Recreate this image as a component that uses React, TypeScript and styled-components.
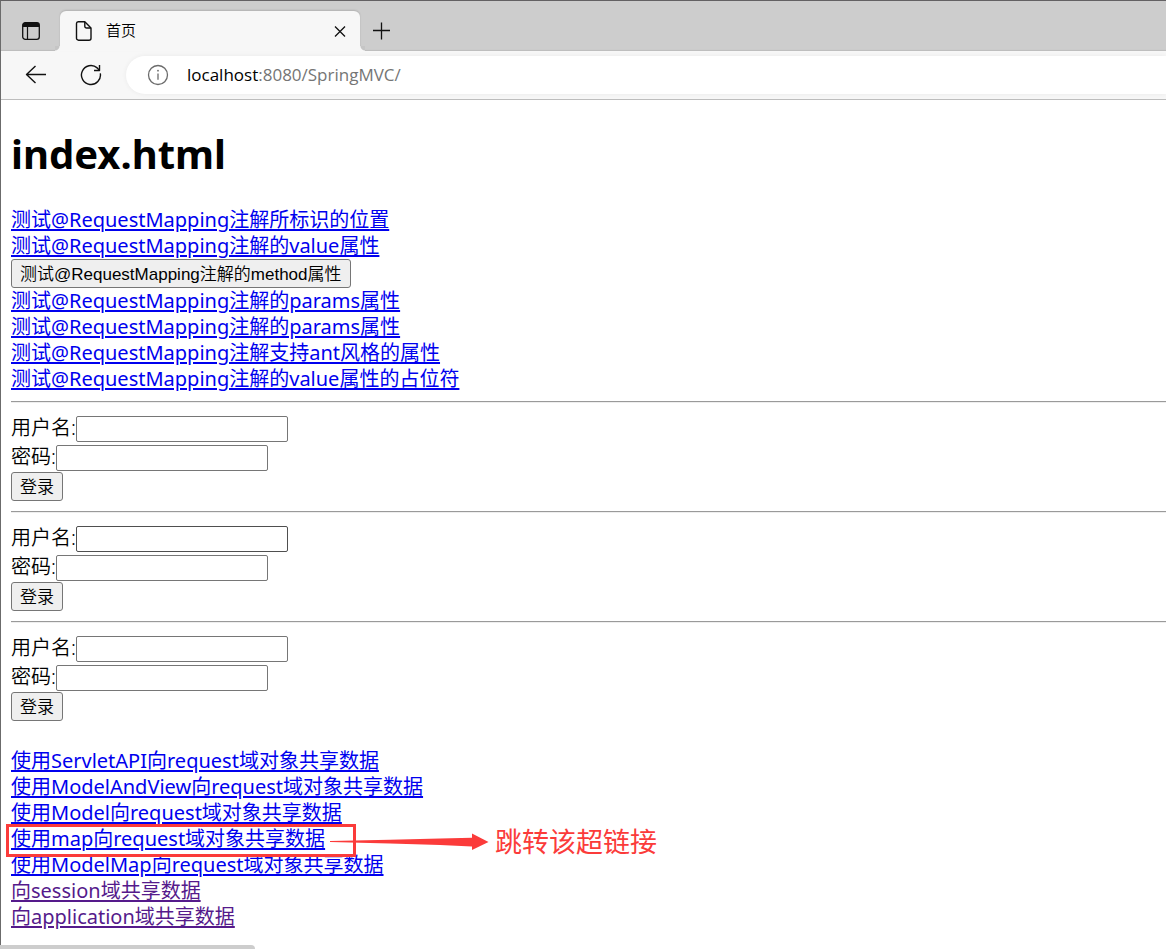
import React from "react";
import styled, { createGlobalStyle } from "styled-components";

const uiFont = `"Noto Sans", "Open Sans", "Noto Sans CJK SC", sans-serif`;
const controlFont = `"Liberation Sans", "Noto Sans CJK SC", sans-serif`;
const red = "#fb3b3a";
const labelWeight = 350;

const GlobalStyle = createGlobalStyle`
  *, *::before, *::after { box-sizing: border-box; }
  html, body { margin: 0; padding: 0; }
  body { background: #fff; color: #000; font-family: ${uiFont}; overflow-x: hidden; }
`;

const Frame = styled.div`
  border-top: 1px solid #636163;
  border-left: 1px solid #6b6b6b;
`;

const TabStrip = styled.div`
  display: flex;
  align-items: flex-end;
  height: 50px;
  background: #cdcdcd;
  box-shadow: inset 0 -2px 1px -1px #bdbdbd;
`;

const IconButton = styled.button<{ $width: number; $height: number }>`
  display: flex;
  flex: none;
  align-items: center;
  justify-content: center;
  width: ${(p) => p.$width}px;
  height: ${(p) => p.$height}px;
  padding: 0;
  border: 0;
  background: transparent;
  color: #111;
`;

const Tab = styled.div`
  position: relative;
  display: flex;
  align-items: center;
  width: 300px;
  height: 40px;
  padding: 0 9px 0 15px;
  border-radius: 6px 6px 0 0;
  background: #f7f7f7;
  box-shadow: 0 -1px 2px rgba(0, 0, 0, 0.14);

  &::before,
  &::after {
    content: "";
    position: absolute;
    bottom: 0;
    width: 5px;
    height: 5px;
  }
  &::before {
    right: 100%;
    background: radial-gradient(circle at 0 0, #c5c5c5 4px, #f7f7f7 5px);
  }
  &::after {
    left: 100%;
    background: radial-gradient(circle at 100% 0, #c5c5c5 4px, #f7f7f7 5px);
  }
`;

const TabTitle = styled.span`
  flex: 1;
  margin-left: 13px;
  padding-bottom: 2px;
  font-size: 15px;
  font-weight: ${labelWeight};
  line-height: 20px;
`;

const Toolbar = styled.div`
  display: flex;
  align-items: center;
  height: 49px;
  padding-left: 7px;
  border-bottom: 1px solid #bdbdbd;
  background: #f7f7f7;
`;

const AddressBar = styled.div`
  display: flex;
  flex: 1;
  align-items: center;
  height: 38px;
  margin-left: 8px;
  padding-left: 21px;
  border-radius: 19px 0 0 19px;
  background: #fff;
  box-shadow: 0 0 5px rgba(0, 0, 0, 0.06);
`;

const Url = styled.span`
  margin-left: 18px;
  font-family: "Open Sans", sans-serif;
  font-size: 17px;
  line-height: 24px;
  color: #757575;
`;

const Host = styled.span`
  color: #000;
`;

const Page = styled.main`
  padding: 27px 0 16px 10px;
  font-size: 20px;
  line-height: 26px;
`;

const Title = styled.h1`
  margin: 0 0 26px;
  font-size: 40px;
  line-height: 54px;
`;

const LinkList = styled.nav`
  display: flex;
  flex-direction: column;
  align-items: flex-start;
`;

const Link = styled.a<{ $visited?: boolean }>`
  color: ${(p) => (p.$visited ? "#551a8b" : "#0000ee")};
  text-decoration: underline;
  text-decoration-thickness: 2px;
  text-underline-offset: 2px;
  white-space: nowrap;
`;

const Button = styled.button`
  display: block;
  height: 29px;
  padding: 2px 8px 0;
  border: 1px solid #767676;
  border-radius: 3px;
  background: #efefef;
  color: #000;
  font-family: ${controlFont};
  font-size: 17px;
  font-weight: ${labelWeight};
  line-height: 25px;
  white-space: nowrap;
`;

const Divider = styled.hr`
  margin: 9px 0 10px;
  height: 2px;
  border: 0;
  border-top: 1px solid #9a9a9a;
  border-bottom: 1px solid #eee;
`;

const LoginForm = styled.form`
  display: flex;
  flex-direction: column;
  align-items: flex-start;
  padding: 3px 0 1px;
`;

const Field = styled.label`
  display: flex;
  align-items: flex-start;
  height: 26px;
  margin-bottom: 3px;
  font-weight: ${labelWeight};
  line-height: 24px;

  & + & {
    margin-bottom: 1px;
  }
`;

const TextInput = styled.input<{ $hovered?: boolean }>`
  width: 212px;
  height: 26px;
  padding: 1px 2px;
  border: 1px solid ${(p) => (p.$hovered ? "#4f4f4f" : "#767676")};
  border-radius: 2px;
  background: #fff;
  font-family: ${controlFont};
  font-size: 17px;
`;

const SharingLinks = styled(LinkList)`
  margin-top: 26px;
`;

const Marked = styled.div`
  position: relative;
`;

const MarkBox = styled.div`
  position: absolute;
  top: -2px;
  left: -5px;
  width: 350px;
  height: 33px;
  border: 3px solid ${red};
  pointer-events: none;
`;

const MarkNote = styled.div`
  position: absolute;
  top: 0;
  left: 319px;
  display: flex;
  align-items: center;
  gap: 6px;
  height: 32px;
  color: ${red};
  font-size: 27px;
  line-height: 32px;
  white-space: nowrap;
`;

const StatusBubble = styled.div`
  position: fixed;
  bottom: 0;
  left: 0;
  width: 255px;
  height: 4px;
  border-radius: 0 4px 0 0;
  background: #cdcdcd;
`;

const PanelIcon = () => (
  <svg width="18" height="18" viewBox="0 0 18 18" fill="none" aria-hidden="true">
    <rect x="0.7" y="0.7" width="16.6" height="16.6" rx="2.6" stroke="currentColor" strokeWidth="1.3" />
    <path d="M0.7 5V3.2A2.6 2.6 0 0 1 3.3 0.6h11.4a2.6 2.6 0 0 1 2.6 2.6V5z" fill="currentColor" />
    <path d="M5.5 5v12" stroke="currentColor" strokeWidth="1.2" />
  </svg>
);

const FileIcon = () => (
  <svg width="18" height="20" viewBox="0 0 18 20" fill="none" stroke="#111" strokeWidth="1.4" aria-hidden="true">
    <path d="M3.2 0.8h6.6L16 7v10.2a2 2 0 0 1-2 2H3.5a2 2 0 0 1-2-2V2.6a1.8 1.8 0 0 1 1.7-1.8z" strokeLinejoin="round" />
    <path d="M9.8 0.9v4.3a1.8 1.8 0 0 0 1.8 1.8H16" />
  </svg>
);

const CloseIcon = () => (
  <svg width="12" height="12" viewBox="0 0 12 12" fill="none" stroke="currentColor" strokeWidth="1.3" aria-hidden="true">
    <path d="M1 1.500l10 10M11 1.500L1 11.500" />
  </svg>
);

const PlusIcon = () => (
  <svg width="18" height="18" viewBox="0 0 18 18" fill="none" stroke="currentColor" strokeWidth="1.3" aria-hidden="true">
    <path d="M8.500 0.500v17M0 8.500h17" />
  </svg>
);

const BackIcon = () => (
  <svg width="22" height="20" viewBox="0 0 22 20" fill="none" stroke="currentColor" strokeWidth="1.4" aria-hidden="true">
    <path d="M21 9.500H1.500M10.500 1L1.500 9.500l9 8.500" strokeLinejoin="round" />
  </svg>
);

const ReloadIcon = () => (
  <svg width="22" height="22" viewBox="0 0 22 22" fill="none" stroke="currentColor" strokeWidth="1.4" aria-hidden="true">
    <path d="M20.300 9.400A9.500 9.500 0 1 1 17.200 3.900L19.500 6.200" />
    <path d="M19.500 1v5.500h-5.500" strokeLinejoin="round" />
  </svg>
);

const InfoIcon = () => (
  <svg width="22" height="22" viewBox="0 0 22 22" fill="none" stroke="#6b6b6b" strokeWidth="1.3" aria-hidden="true">
    <circle cx="11" cy="11" r="9.5" />
    <path d="M11 9.5v6.2" />
    <circle cx="11" cy="6.7" r="0.9" fill="#6b6b6b" stroke="none" />
  </svg>
);

const Arrow = () => (
  <svg width="159" height="18" viewBox="0 0 159 18" fill={red} aria-hidden="true">
    <path d="M0 8L60 6.800L110 5.400L142 4.800V0.600L158.500 9L142 17V13.400L110 12L60 10.600L0 9Z" />
  </svg>
);

const Login = ({ id, hovered }: { id: string; hovered?: boolean }) => (
  <LoginForm onSubmit={(e) => e.preventDefault()}>
    <Field htmlFor={`${id}-user`}>
      用户名:
      <TextInput id={`${id}-user`} type="text" $hovered={hovered} />
    </Field>
    <Field htmlFor={`${id}-password`}>
      密码:
      <TextInput id={`${id}-password`} type="password" />
    </Field>
    <Button type="submit">登录</Button>
  </LoginForm>
);

export default function App() {
  return (
    <>
      <GlobalStyle />
      <Frame>
        <TabStrip>
          <IconButton $width={59} $height={40} aria-label="标签页操作">
            <PanelIcon />
          </IconButton>
          <Tab>
            <FileIcon />
            <TabTitle>首页</TabTitle>
            <IconButton $width={22} $height={22} aria-label="关闭标签页">
              <CloseIcon />
            </IconButton>
          </Tab>
          <IconButton $width={43} $height={40} aria-label="新建标签页">
            <PlusIcon />
          </IconButton>
        </TabStrip>
        <Toolbar>
          <IconButton $width={55} $height={38} aria-label="返回">
            <BackIcon />
          </IconButton>
          <IconButton $width={55} $height={38} aria-label="刷新">
            <ReloadIcon />
          </IconButton>
          <AddressBar>
            <InfoIcon />
            <Url>
              <Host>localhost</Host>:8080/SpringMVC/
            </Url>
          </AddressBar>
        </Toolbar>
        <Page>
          <Title>index.html</Title>
          <LinkList>
            <Link href="#target">测试@RequestMapping注解所标识的位置</Link>
            <Link href="#value">测试@RequestMapping注解的value属性</Link>
            <Button type="button">测试@RequestMapping注解的method属性</Button>
            <Link href="#params">测试@RequestMapping注解的params属性</Link>
            <Link href="#headers">测试@RequestMapping注解的params属性</Link>
            <Link href="#ant">测试@RequestMapping注解支持ant风格的属性</Link>
            <Link href="#path">测试@RequestMapping注解的value属性的占位符</Link>
          </LinkList>
          <Divider />
          <Login id="first" />
          <Divider />
          <Login id="second" hovered />
          <Divider />
          <Login id="third" />
          <SharingLinks>
            <Link href="#servlet">使用ServletAPI向request域对象共享数据</Link>
            <Link href="#mav">使用ModelAndView向request域对象共享数据</Link>
            <Link href="#model">使用Model向request域对象共享数据</Link>
            <Marked>
              <Link href="#map">使用map向request域对象共享数据</Link>
              <MarkBox />
              <MarkNote>
                <Arrow />
                跳转该超链接
              </MarkNote>
            </Marked>
            <Link href="#modelmap">使用ModelMap向request域对象共享数据</Link>
            <Link $visited href="#session">向session域共享数据</Link>
            <Link $visited href="#application">向application域共享数据</Link>
          </SharingLinks>
        </Page>
        <StatusBubble />
      </Frame>
    </>
  );
}
